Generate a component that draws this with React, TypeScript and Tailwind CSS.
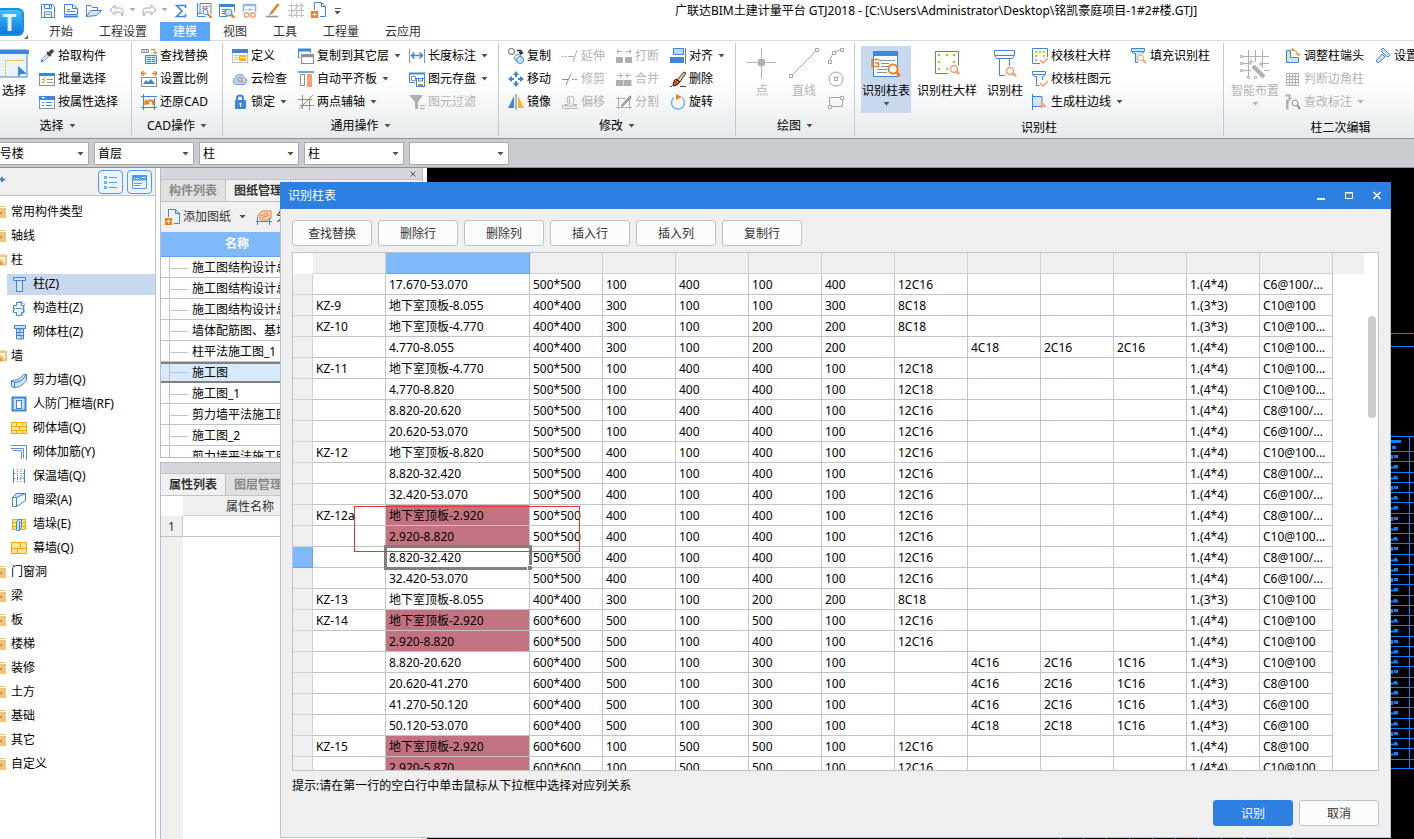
import React, { ReactNode } from 'react';

const B = '#3f87d6';
const L = '#cfe2f8';
const G = '#87929a';
const O = '#f07f24';
const S = '#ff9c70';
const D = '#b0b0b0';
const Y = '#fbb117';

// 16x16 drawings used by the quick bar, the ribbon and the tree
const ICONS: Record<string, ReactNode> = {
  save: <g fill="none" stroke={B}><path d="M1.500 2.500h11l2 2v11h-13z" /><path d="M4.500 2.500v4h7v-4M9.500 3v3M4.500 15v-5h7v5M6 12.500h4" /></g>,
  doc: <g fill="none" stroke={B}><path d="M1.500 2.500h8l5 4v6h-13z" /><path d="M9.500 2.500v4h5M4 9.500h8M4 7.500h3" /><path d="M1 14.500h14" strokeWidth="2" /></g>,
  open: <g fill="none" stroke={B}><path d="M.5 14.500v-11h4l2 2h5v3" /><path d="M.5 14.500l4-6h11l-5 5z" fill={L} /></g>,
  undo: <path d="M1 8l5-5v3h5c3 0 4 3 2 8 0-3-1-4-3-4H6v3z" fill="none" stroke="#a9a9a9" />,
  redo: <path d="M15 8l-5-5v3H5c-3 0-4 3-2 8 0-3 1-4 3-4h4v3z" fill="none" stroke="#a9a9a9" />,
  sum: <path d="M12.500 6V3.500h-9L9 9l-5.500 5.500h9V12" fill="none" stroke={B} strokeWidth="1.600" />,
  lookup: <g fill="none" stroke={B}><path d="M1.500 1v13.500h8M4 11.500V1.500h11V12" /><path d="M1 11.500h5" /><path d="M6.500 4.500h2m1 0h2m1 0h1M6.500 6.500h2m1 0h2" stroke="#8a6a8c" strokeWidth="1.500" /><circle cx="9.500" cy="10" r="2.500" fill="#fff" /><path d="M11.500 12l4 4" stroke="#d9773f" strokeWidth="2" /></g>,
  winsearch: <g fill="none" stroke={B}><path d="M8 14.500H.5v-12h15v7" /><path d="M0 3.500h16" strokeWidth="3" /><path d="M3 7.500h4M3 9.500h3M3 11.500h3" /><circle cx="9.500" cy="10.500" r="3.500" fill={L} /><path d="M12.500 13l3 3" stroke={O} strokeWidth="2.500" /></g>,
  glasses: <g fill="none" stroke="#8fb9e8"><path d="M1.500 10V2.500h12V10M1 3.500h13" strokeWidth="1.500" /><path d="M3 7.500h2M6 7.500h5M8 5.500v4" /><g stroke={S} strokeWidth="1.500"><circle cx="4.500" cy="13" r="2.300" /><circle cx="11" cy="13" r="2.300" /></g></g>,
  pen: <g fill="none"><path d="M1 14.500h12" stroke={G} strokeWidth="1.500" /><path d="M6 11.500L13.500 2" stroke={O} strokeWidth="2.500" /><path d="M3.500 13.500l2-3 1.500 1.500z" fill={G} /></g>,
  grid: <path d="M3.500 1v15M8.500 1v15M13.500 1v15M0 3.500h16M0 8.500h16M0 13.500h16M0 14L14 1M5 15L15 4" stroke="#c4c4c4" fill="none" />,
  adddoc: <g fill="none" stroke={B}><path d="M3.500 8V.500h7l4 4v10H9M10.500.500v4h4" /><rect x="0" y="9" width="7" height="7" fill={O} stroke="none" /><path d="M1.500 12.500h4M3.500 10.500v4" stroke="#fff" /></g>,
  dropper: <g fill="none"><path d="M2 14l1-3 5-5 2 2-5 5z" fill={L} stroke="#9aa6b0" /><path d="M1.500 14.500l1.500-3 1.500 1.500z" fill={B} /><path d="M8 4l4 4" stroke="#444" strokeWidth="2" /><path d="M10 6l3-3" stroke="#444" strokeWidth="3.500" strokeLinecap="round" /></g>,
  batch: <g fill="none" stroke={B}><rect x=".5" y="2.500" width="15" height="12" fill="#fff" stroke={G} /><path d="M0 3.500h16" strokeWidth="3" /><path d="M8 8.500h6M8 11.500h6" stroke={G} /><path d="M3 8l1 1 2-3M3 11l1 1 2-3" stroke={O} /></g>,
  attr: <g fill="none" stroke={B}><rect x=".5" y="2.500" width="15" height="12" fill="#fff" stroke={G} /><path d="M0 4h16" strokeWidth="4" /><path d="M2 3h4l-2 2z" fill="#fff" stroke="none" /><path d="M3 8.500h2M7 8.500h6M3 11.500h2M7 11.500h6" /></g>,
  replace: <g fill="none"><path d="M.5 1.500h7v3h-7zM3 1.500v3M5.500 1.500v3" stroke={G} /><path d="M10 1.500h4v4M12 4l2 2 2-2" stroke={O} /><path d="M6 7.500h9.500v8H4.500v-8z" stroke={B} fill={L} /><path d="M6 9.500h4M6 11.500h4M6 13.500h4M11 9.500h3M11 11.500h3M11 13.500h3" stroke={B} /></g>,
  scale: <g fill="none"><path d="M0 2.500h5M2.500 0L0 2.500 2.500 5M16 2.500h-5M13.500 0L16 2.500 13.500 5" stroke={O} strokeWidth="1.300" /><rect x=".5" y="6.500" width="15" height="9" stroke={G} fill="#fff" /><path d="M2 13l3-4 2 2 3-3 4 5z" fill={B} /></g>,
  restore: <g fill="none"><path d="M2.500 0v16M13.500 4v12M0 2.500h16M0 13.500h16" stroke={B} /><path d="M12 11c1-5-2-6-6-3" stroke={O} strokeWidth="2" /><path d="M3 11l1-6 5 5z" fill={O} /></g>,
  define: <g fill="none"><rect x=".5" y="1.500" width="15" height="13" fill="#fff" stroke="#b8c0c8" /><path d="M0 3h16" stroke={B} strokeWidth="4" /><path d="M2 7.500h4M2 9.500h4M2 11.500h4" stroke="#b8c0c8" /><rect x="7" y="7" width="7" height="6" fill={Y} /><path d="M8 9.500h5" stroke="#fff" /></g>,
  cloud: <g><path d="M4 13.500a3.500 3.500 0 0 1-1-6.500 5 5 0 0 1 9.500-.5A3.800 3.800 0 0 1 12.500 13.500z" fill="#b3d2f5" stroke="#6fa8e6" /><circle cx="8" cy="8.500" r="2" fill="none" stroke={O} /><path d="M9.500 10l2.500 2.500" stroke={O} /></g>,
  lock: <g><path d="M5 7V4.500a3 3 0 0 1 6 0V7" fill="none" stroke={B} strokeWidth="2" /><rect x="3" y="6" width="11" height="9" rx="1" fill={B} /><path d="M7.500 9h2v1.500l-.5.5v2h-1v-2l-.5-.5z" fill="#fff" /></g>,
  copyfloor: <g fill="#fff"><path d="M2 9.500H.5v-8h12V5" stroke={B} fill="none" /><path d="M0 2h13" stroke={B} strokeWidth="3" /><rect x="3.500" y="6.500" width="12" height="9" stroke={G} /><path d="M3 8h13" stroke={G} strokeWidth="2.500" /></g>,
  align2: <g><path d="M0 1h16" stroke={B} strokeWidth="1.500" /><rect x="2.500" y="3.500" width="4" height="11" fill="#fff" stroke={G} /><rect x="9" y="3" width="5" height="13" fill={S} /></g>,
  axis: <g fill="none"><path d="M4.500 1v14M11.500 4v12M0 5.500h14M2 11.500h14" stroke={G} /><path d="M1 15L15 1" stroke={O} /></g>,
  length: <g fill="none" stroke={B}><path d="M.5 1v14M15.500 1v14" stroke={G} /><path d="M2.500 7.500h11M5.500 4.500l-3 3 3 3M10.500 4.500l3 3-3 3" strokeWidth="1.500" /></g>,
  store: <g fill="none" stroke={B}><path d="M6 11.500H.5v-9h15V7" /><path d="M0 2.500h16" strokeWidth="2" /><path d="M2.500 5.500h4v4h-4z" stroke={G} /><rect x="7.500" y="7.500" width="8" height="8" fill="#fff" /><path d="M9.500 8v2h4V8" /><path d="M9 14h5" stroke={O} strokeWidth="2" /></g>,
  filter: <g fill={D}><path d="M0 1h14L9 8v7H6V8z" /><path d="M11 11.500h5M11 14.500h5" stroke={D} /></g>,
  copy: <g fill="none"><circle cx="3.500" cy="3.500" r="3" stroke="#555" /><path d="M9 2.500h4V5M11 4l2 2 2-2" stroke="#222" strokeWidth="1.300" /><circle cx="10" cy="10" r="3.500" stroke={B} fill="#fff" /><circle cx="12" cy="12" r="3.500" stroke={B} fill={L} fillOpacity=".8" /></g>,
  move: <g fill={B}><path d="M8 0l3 4H5zM8 16l-3-4h6zM0 8l4-3v6zM16 8l-4-3v6z" /><path d="M8 3v3M8 10v3M3 8h3M10 8h3" stroke={B} strokeWidth="2" /></g>,
  mirror: <g><path d="M6 2v12H0z" fill={B} /><path d="M8 0v16" stroke="#777" /><path d="M10 2v12h6z" fill={Y} /></g>,
  extend: <g stroke={D} fill="none"><path d="M0 8.500h9" strokeDasharray="2 1" /><path d="M8 8.500h4M11 14l4-12" /></g>,
  trim: <g stroke="#8c8c8c" fill="none"><path d="M0 8.500h6M4 14L9 3" /><path d="M10 8.500h6" strokeDasharray="2 1" /></g>,
  offset: <path d="M1.500 14.500h14M3 11.500H.5v3M15 10.500h-4c-1-1 1-3 1-5a3.500 3.500 0 0 0-7 0c0 2 2 4 1 5H3v1.500h12M8 3.500c-2 2 1 5-1 7" fill="none" stroke={D} />,
  brk: <g fill={D}><rect x="0" y="9" width="7" height="6" /><rect x="9" y="9" width="7" height="6" /><path d="M1 3.500h5M3 1L1 3.500 3 6M15 3.500h-5M13 1l2 2.500L13 6" fill="none" stroke={D} /></g>,
  join: <g fill={D}><rect x="0" y="9" width="7.500" height="6" /><rect x="8" y="9" width="7.500" height="6" /><path d="M1 4.500h5M4 2l2 2.500L4 7M15 4.500h-5M12 2l-2 2.500L12 7" fill="none" stroke={D} /></g>,
  split: <g fill="none" stroke="#8f8f8f"><path d="M2.500 3v12M13.500 5v10M0 4.500h10M0 13.500h16" stroke={D} /><path d="M5 12l8-9 2-1-1 3-7 7z" fill={D} /></g>,
  alignto: <g><rect x="3.500" y=".5" width="10" height="6" fill="#b9d6f8" stroke={B} /><rect x="0" y="9" width="14" height="6" fill={B} /><path d="M15.500 0v16" stroke="#777" /></g>,
  erase: <g><path d="M0 15.500h2M10 15.500h6" stroke="#444" /><path d="M7 9l7-8 2 1-6 9z" fill="#e8c890" stroke="#333" /><path d="M6 8l4 3-3 3-4 1c0-3 1-6 3-7z" fill="#d8501c" stroke="#222" /></g>,
  rotate: <g fill="none"><path d="M4 3.500A6.500 6.500 0 1 0 12 3.500" stroke="#74aef0" strokeWidth="1.500" /><path d="M6 0v6l6-3z" fill={O} /></g>,
  arc: <g fill="none" stroke="#a4a4a4"><path d="M2 13C3 7 6 3 13 2" /><path d="M.5 12.500h3v3h-3zM4.500 3.500h3v3h-3zM12.500.500h3v3h-3z" fill="#fff" /></g>,
  circle: <g fill="none" stroke="#a4a4a4"><circle cx="8" cy="8" r="7" /><path d="M8 8l3-3" /><rect x="6.500" y="6.500" width="3" height="3" fill="#fff" /></g>,
  rect: <g fill="none" stroke="#a4a4a4"><path d="M1.500 3.500h13v9h-13z" /><path d="M.5 11.500h3v3h-3zM12.500 2.500h3v3h-3z" fill="#fff" /></g>,
  checkdetail: <g fill="none" stroke={B}><path d="M8 15.500H.5V.500h15V9" /><path d="M3 4h2m2 0h2m2 0h2M3 8h2M11 8h2M3 12h2" stroke={Y} strokeWidth="2" /><path d="M8 12l3 3 5-5" stroke={S} strokeWidth="1.500" /></g>,
  checkelem: <g fill="none" stroke={B}><path d="M7 14.500H4.500v-9h-2l-2-2v-3h13v3l-2 2h-1V9M1 3.500h12" /><path d="M8 12l3 3 5-5" stroke={S} strokeWidth="1.500" /></g>,
  edge: <g fill="none" stroke={B}><path d="M.5 0v16M0 2.500h10v10H0" fill={L} /><path d="M9 7v8l2-2h4z" fill={S} stroke="none" /></g>,
  fillcol: <g fill="none" stroke={B}><path d="M7 14.500H4.500v-9h-2l-2-2v-3h13v3l-2 2M1 3.500h12" fill={L} /><circle cx="9.500" cy="10" r="3" fill="#fff" stroke={S} /><path d="M12 12l3 3" stroke={S} strokeWidth="2" /></g>,
  adjust: <g fill="none"><path d="M1.500 2.500h4v7h8v5h-12z" stroke={B} fill={L} /><path d="M7 1.500c3 0 5 2 6 5M8 0L6.500 2l3 1M11 5l2.500 3L15 5" stroke={O} /></g>,
  judge: <path d="M1.500 2.500h12v12h-12zM4.500 2v13M7.500 2v13M10.500 2v13M1 5.500h13M1 8.500h13M1 11.500h13" fill="none" stroke={D} />,
  modify: <g fill="none" stroke={D}><path d="M.5 1.500h4v3h2M2 5.500v10M4.500 6.500h-2v9" strokeWidth="2" /><circle cx="10" cy="9" r="3" stroke="#8e8e8e" /><path d="M12 11l3 4" stroke="#8e8e8e" strokeWidth="2" /></g>,
  setting: <g fill={L} stroke={B}><path d="M1 13l6-7 3 3-7 6z" /><path d="M6 2l2-2 7 7-2 2-2-1-4-4z" /></g>,
  col: <g fill={L} stroke={B}><path d="M2.500 1.500h12v3h-12z" /><path d="M5.500 5v10.500h6V5" /></g>,
  gzcol: <g fill="none" stroke={B}><path d="M7.500 1.500h4v2h2v3h-1v2h1v4h-2v2h-2" stroke="#9cc4f2" /><path d="M5.500 2.500h5v3h2v3h-1v1h1v3h-2v3h-5v-3h-3v-3h1v-1h-1v-3h3z" fill="#eaf3fd" /><path d="M5 8.500h5" /></g>,
  qtcol: <g fill={L} stroke={B}><path d="M3.500 1.500h11v3h-11z" /><path d="M5.500 5v10h7V5zM6 8.500h6M6 11.500h6M9 5v3M8 9v3M10 12v3" /></g>,
  shear: <g fill={L} stroke={B}><path d="M.5 8.500c6 0 9-2 12-6h3c-3 5-7 8-12 8z" /><path d="M.5 8.500l3 2v5l-3-1zM3.500 10.500c5 0 9-3 12-8v6c-3 4-7 7-12 7z" /></g>,
  rf: <g fill="none" stroke={B}><rect x="1.500" y="1.500" width="13" height="13" fill={L} strokeWidth="2" /><rect x="5.500" y="4.500" width="5" height="8" fill="#fff" /></g>,
  brick: <path d="M.5 2.500h15v11H.500zM0 6.500h16M0 10.500h16M5.500 2.500v4M11.500 2.500v4M8.500 6.500v4M5.500 10.500v3M11.500 10.500v3" fill="#fde29a" stroke="#f5a800" />,
  rebar: <path d="M0 1.500h15.500V16M0 4.500h12.500V14M2 6.500h8.500V15" fill="none" stroke="#5e8fc8" />,
  insul: <g fill="none" stroke={B}><path d="M2.500 1v14M13.500 1v14" /><path d="M6.500 1v14M10 1v14" strokeDasharray="1 1" /><path d="M3 5.500h10M3 10.500h10" strokeDasharray="1 2" /></g>,
  beam: <g fill="#fff" stroke={B}><path d="M1.500 5.500l4-4h9l-4 4z" fill={L} /><path d="M1.500 5.500h4v9h-4zM5.500 5.500l9-4v7l-9 6z" /></g>,
  duo: <g><path d="M1.500 3.500h13v10h-13zM1 6.500h14M1 10.500h14" fill="#fde29a" stroke="#f5a800" /><path d="M5.500 5.500l2-2h3v8l-2 3h-3zM8.500 5v9" fill={L} stroke={B} /></g>,
  curtain: <path d="M.5 2.500h15v11H.500zM0 8.500h16M9.500 2.500v6M6.500 8.500v5" fill="#fde29a" stroke="#f5a800" />,
  splitdwg: <g fill="none"><path d="M2 6l4-4h9v7l-4 2H5z" stroke={O} fill="#fbd3b4" /><path d="M4 7l8-3M6 9l7-3" stroke={O} /><path d="M1.500 8v8M13.500 9v7M0 12.500h16" stroke={B} /></g>,
};

const Icon = ({ name }: { name: string }) => (
  <svg width="16" height="16" viewBox="0 0 16 16" className="shrink-0" aria-hidden="true">{ICONS[name]}</svg>
);

const Caret = ({ dim = false }: { dim?: boolean }) => (
  <svg width="7" height="4" viewBox="0 0 7 4" className="shrink-0" aria-hidden="true">
    <path d="M.5 0h6l-3 3.500z" fill={dim ? '#b0b0b0' : '#505050'} />
  </svg>
);

interface ToolProps {
  icon: string;
  label: string;
  menu?: boolean;
  dim?: boolean;
}

const Tool = ({ icon, label, menu, dim }: ToolProps) => (
  <button disabled={dim} className={`flex h-[23px] items-center gap-[3px] whitespace-nowrap ${dim ? 'text-[#b4b4b4]' : 'text-black'}`}>
    <Icon name={icon} />
    <span>{label}</span>
    {menu && <span className="pl-[2px]"><Caret dim={dim} /></span>}
  </button>
);

const ToolColumn = ({ items, className = '' }: { items: ToolProps[], className?: string }) => (
  <div className={`flex shrink-0 flex-col items-start pt-px ${className}`}>
    {items.map(item => <Tool key={item.label} {...item} />)}
  </div>
);

interface BigToolProps {
  label: string;
  className?: string;
  dim?: boolean;
  menu?: boolean;
  children: ReactNode;
}

const BigTool = ({ label, className = '', dim, menu, children }: BigToolProps) => (
  <button disabled={dim} className={`mt-[3px] flex h-[67px] shrink-0 flex-col items-center whitespace-nowrap pt-[2px] ${dim ? 'text-[#b4b4b4]' : 'text-black'} ${className}`}>
    <svg width="30" height="32" viewBox="0 0 30 32" aria-hidden="true">{children}</svg>
    <span className="leading-[22px]">{label}</span>
    {menu && <Caret dim={dim} />}
  </button>
);

const Group = ({ label, menu, className, children }: { label: string, menu?: boolean, className: string, children: ReactNode }) => (
  <section className={`flex shrink-0 flex-col border-r border-[#c6cace] ${className}`}>
    <div className="flex h-[70px]">{children}</div>
    {menu
      ? <button className="flex h-6 items-center justify-center gap-[5px] pt-[2px]">{label}<Caret /></button>
      : <p className="flex h-6 items-center justify-center pt-[6px]">{label}</p>}
  </section>
);

const TABS = ['开始', '工程设置', '建模', '视图', '工具', '工程量', '云应用'];
const QUICK = ['save', 'doc', 'open', 'undo', 'redo', 'sum', 'lookup', 'winsearch', 'glasses', 'pen', 'grid', 'adddoc'];

const Header = () => (
  <header className="flex shrink-0 bg-white">
    <div className="flex w-8 shrink-0 items-end border-b border-[#d9d9d9]">
      <div className="mb-1 flex h-7 w-6 items-center justify-center rounded-r-md border-2 border-l-0 border-[#1690e8] bg-linear-to-b from-[#3fc0f8] to-[#0f78dc] pr-[3px] text-[24px] font-bold text-[#e6f4ff]">T</div>
      <svg width="4" height="4" className="mb-[1px]" aria-hidden="true"><path d="M4 0v4H0z" fill="#666" /></svg>
    </div>
    <div className="min-w-0 flex-1">
      <div className="flex h-[22px] items-center pl-2">
        <div className="flex shrink-0 items-center gap-[7px]">
          {QUICK.map(name => (
            <button key={name} aria-label={name} className="flex -translate-y-px items-center gap-1">
              <Icon name={name} />
              {(name === 'undo' || name === 'redo') && <span className="w-[5px]"><Caret dim /></span>}
            </button>
          ))}
          <button aria-label="more" className="flex flex-col items-center gap-[2px]"><span className="h-px w-[6px] bg-[#555]" /><Caret /></button>
        </div>
        <h1 className="flex-1 truncate pl-[334px]">广联达BIM土建计量平台 GTJ2018 - [C:\Users\Administrator\Desktop\铭凯豪庭项目-1#2#楼.GTJ]</h1>
      </div>
      <nav className="flex h-[19px] border-b border-[#d9d9d9] pl-1 text-[#333]">
        {TABS.map(tab => (
          <button key={tab} className={`h-[19px] px-[13px] leading-[19px] ${tab === '建模' ? 'bg-[#5aa7f7] text-white' : ''}`}>{tab}</button>
        ))}
      </nav>
    </div>
  </header>
);

const Ribbon = () => (
  <div className="flex h-[98px] shrink-0 overflow-hidden border-b border-[#8d9196] bg-linear-to-b from-white from-40% to-[#e6eaec] py-[2px]">
    <Group label="选择" menu className="w-[132px] pr-4">
      <div className="flex gap-[11px]">
        <BigTool label="选择" className="w-7">
          <rect x="-1" y="2" width="29" height="27" fill="#eaf2fc" stroke={B} />
          <path d="M0 4h30" stroke={B} strokeWidth="4" />
          <path d="M6.500 29V12.500H26" fill="none" stroke={Y} strokeDasharray="2 1" />
          <path d="M19 18v11l3-3h6z" fill={B} />
        </BigTool>
        <ToolColumn items={[
          { icon: 'dropper', label: '拾取构件' },
          { icon: 'batch', label: '批量选择' },
          { icon: 'attr', label: '按属性选择' },
        ]} />
      </div>
    </Group>
    <Group label="CAD操作" menu className="w-[91px]">
      <ToolColumn className="pl-[9px]" items={[
        { icon: 'replace', label: '查找替换' },
        { icon: 'scale', label: '设置比例' },
        { icon: 'restore', label: '还原CAD' },
      ]} />
    </Group>
    <Group label="通用操作" menu className="w-[276px]">
      <ToolColumn className="w-[75px] pl-[9px]" items={[
        { icon: 'define', label: '定义' },
        { icon: 'cloud', label: '云检查' },
        { icon: 'lock', label: '锁定', menu: true },
      ]} />
      <ToolColumn className="w-[111px]" items={[
        { icon: 'copyfloor', label: '复制到其它层', menu: true },
        { icon: 'align2', label: '自动平齐板', menu: true },
        { icon: 'axis', label: '两点辅轴', menu: true },
      ]} />
      <ToolColumn items={[
        { icon: 'length', label: '长度标注', menu: true },
        { icon: 'store', label: '图元存盘', menu: true },
        { icon: 'filter', label: '图元过滤', dim: true },
      ]} />
    </Group>
    <Group label="修改" menu className="w-[237px]">
      <ToolColumn className="w-[63px] pl-[9px]" items={[
        { icon: 'copy', label: '复制' },
        { icon: 'move', label: '移动' },
        { icon: 'mirror', label: '镜像' },
      ]} />
      <ToolColumn className="w-[54px]" items={[
        { icon: 'extend', label: '延伸', dim: true },
        { icon: 'trim', label: '修剪', dim: true },
        { icon: 'offset', label: '偏移', dim: true },
      ]} />
      <ToolColumn className="w-[54px]" items={[
        { icon: 'brk', label: '打断', dim: true },
        { icon: 'join', label: '合并', dim: true },
        { icon: 'split', label: '分割', dim: true },
      ]} />
      <ToolColumn items={[
        { icon: 'alignto', label: '对齐', menu: true },
        { icon: 'erase', label: '删除' },
        { icon: 'rotate', label: '旋转' },
      ]} />
    </Group>
    <Group label="绘图" menu className="w-[119px]">
      <BigTool label="点" dim className="ml-2 w-9">
        <path d="M14.500 0v10M14.500 19v11M0 14.500h10M19 14.500h10" stroke={D} />
        <circle cx="14.500" cy="14.500" r="4" fill={D} />
      </BigTool>
      <BigTool label="直线" dim className="ml-[6px] w-9">
        <path d="M2 28L28 2" stroke="#a4a4a4" />
        <path d="M.5 26.500h3v3h-3zM26.500.500h3v3h-3z" fill="#fff" stroke="#a4a4a4" />
      </BigTool>
      <div className="ml-[6px] flex flex-col pt-px">
        {['arc', 'circle', 'rect'].map(name => (
          <button key={name} disabled aria-label={name} className="flex h-[23px] items-center"><Icon name={name} /></button>
        ))}
      </div>
    </Group>
    <Group label="识别柱" className="w-[369px]">
      <BigTool label="识别柱表" menu className="ml-[6px] w-[50px] bg-[#c8d8ef]">
        <rect x="2.500" y="3.500" width="24" height="25" fill="#fff" stroke={B} />
        <path d="M2 5.500h25" stroke={B} strokeWidth="5" />
        <path d="M8 12.500h16M10 15.500h8M6 21.500h10M6 24.500h10M10 18.500h7" stroke={G} />
        <path d="M8 11.500H1v7h6.500v-3.500H4" fill="none" stroke={O} strokeWidth="1.500" />
        <circle cx="22" cy="21" r="4.500" fill="#fff" stroke={O} strokeWidth="2" />
        <path d="M25 24l4 4" stroke={O} strokeWidth="3" />
      </BigTool>
      <BigTool label="识别柱大样" className="ml-[6px] w-[60px]">
        <path d="M16 25.500H3.500v-22h23v14" fill="none" stroke={B} />
        <path d="M6 7h2m6 0h2m5 0h2M6 14h2M6 21h2m6 0h2M21 14h2" stroke="#f5a800" strokeWidth="2" />
        <circle cx="22" cy="21" r="3.500" fill="#fff" stroke={S} strokeWidth="1.500" />
        <path d="M24 23l3 3" stroke={S} strokeWidth="2.500" />
      </BigTool>
      <BigTool label="识别柱" className="ml-[10px] w-9">
        <path d="M15 27.500H9.500v-17H6.500l-2-3v-5h20v5l-2 3h-3V18M5 7.500h19M9 10.500h11" fill="none" stroke={B} />
        <circle cx="20" cy="23" r="3.500" fill="#fff" stroke={S} strokeWidth="1.500" />
        <path d="M22 25l4 3" stroke={S} strokeWidth="2.500" />
      </BigTool>
      <ToolColumn className="w-[108px] pl-[9px]" items={[
        { icon: 'checkdetail', label: '校核柱大样' },
        { icon: 'checkelem', label: '校核柱图元' },
        { icon: 'edge', label: '生成柱边线', menu: true },
      ]} />
      <ToolColumn items={[{ icon: 'fillcol', label: '填充识别柱' }]} />
    </Group>
    <Group label="柱二次编辑" className="w-[234px]">
      <BigTool label="智能布置" menu dim className="ml-[6px] w-[50px]">
        <path d="M8.500 2v27M15.500 2v12M22.500 2v18M1 8.500h28M1 15.500h10M1 22.500h10M22 15.500h7M24 22.500h5" stroke={D} />
        <path d="M.5 7.500h2v2h-2zM.5 14.500h2v2h-2zM.5 21.500h2v2h-2zM7.500 28.500h2v2h-2zM14.500 28.500h2v2h-2z" fill="#fff" stroke={D} />
        <path d="M13 18l11 11" stroke={D} strokeWidth="4" />
        <path d="M11 11v6M8 14h6M19 16h4M21 14v4" stroke={D} />
      </BigTool>
      <ToolColumn className="ml-[5px] w-[90px]" items={[
        { icon: 'adjust', label: '调整柱端头' },
        { icon: 'judge', label: '判断边角柱', dim: true },
        { icon: 'modify', label: '查改标注', dim: true, menu: true },
      ]} />
      <ToolColumn items={[{ icon: 'setting', label: '设置' }]} />
    </Group>
  </div>
);

const COMBOS = [
  { name: '楼栋', value: '1号楼' },
  { name: '楼层', value: '首层' },
  { name: '构件大类', value: '柱' },
  { name: '构件类型', value: '柱' },
  { name: '构件', value: '' },
];

const ComboBar = () => (
  <div className="flex h-[29px] shrink-0 overflow-hidden border-b border-[#8d9196] bg-[#c9ccd1] pt-[3px]">
    <div className="-ml-[11px] flex gap-[5px]">
      {COMBOS.map(({ name, value }) => (
        <div key={name} className="relative h-[23px] w-[100px] border border-[#a8abb0] bg-white">
          <select aria-label={name} defaultValue={value} className="h-full w-full appearance-none px-[3px] leading-5 outline-none">
            <option value={value}>{value}</option>
          </select>
          <span className="pointer-events-none absolute right-1 top-[9px] flex"><Caret /></span>
        </div>
      ))}
    </div>
  </div>
);

interface TreeNode {
  label: string;
  open?: boolean;
  children?: [string, string][];
}

const TREE: TreeNode[] = [
  { label: '常用构件类型' },
  { label: '轴线' },
  { label: '柱', open: true, children: [['col', '柱(Z)'], ['gzcol', '构造柱(Z)'], ['qtcol', '砌体柱(Z)']] },
  {
    label: '墙', open: true, children: [
      ['shear', '剪力墙(Q)'], ['rf', '人防门框墙(RF)'], ['brick', '砌体墙(Q)'], ['rebar', '砌体加筋(Y)'],
      ['insul', '保温墙(Q)'], ['beam', '暗梁(A)'], ['duo', '墙垛(E)'], ['curtain', '幕墙(Q)'],
    ],
  },
  { label: '门窗洞' }, { label: '梁' }, { label: '板' }, { label: '楼梯' }, { label: '装修' },
  { label: '土方' }, { label: '基础' }, { label: '其它' }, { label: '自定义' },
];

const Folder = ({ open }: { open?: boolean }) => (
  <svg width="7" height="14" viewBox="0 0 7 14" aria-hidden="true">
    {open
      ? <g><path d="M0 1.500h7v11H0z" fill="#efc57c" /><path d="M0 4h5v7L2 6H0z" fill="#fff6e4" /><path d="M0 8l3 4H0z" fill="#d89a3c" /></g>
      : <g><path d="M0 1.500h5.500" stroke="#efc57c" /><path d="M0 3h6v10H0z" fill="#efc57c" /><path d="M0 8h2" stroke="#8a6420" /></g>}
  </svg>
);

const Sidebar = () => (
  <aside className="flex w-[156px] shrink-0 flex-col border-r border-[#c0c4ca] bg-white">
    <div className="flex h-7 shrink-0 items-center border-b border-[#c0c4ca] bg-[#efefef]">
      <svg width="5" height="7" className="mb-1" aria-hidden="true"><path d="M0 3.500h5M2 1v5" stroke={B} strokeWidth="2" /></svg>
      <div className="ml-auto flex gap-1 pr-[3px]">
        <button aria-label="列表" className="flex h-6 w-[25px] items-center justify-center rounded border border-[#4f9df0] bg-[#eaf4ff]">
          <svg width="13" height="14" aria-hidden="true"><path d="M.5 1.500h2v2h-2zM.5 6.500h2v2h-2zM.5 11.500h2v2h-2zM5 2.500h8M5 7.500h8M5 12.500h8" fill="none" stroke="#4f9df0" /></svg>
        </button>
        <button aria-label="面板" className="flex h-6 w-[25px] items-center justify-center rounded border border-[#4f9df0] bg-[#eaf4ff]">
          <svg width="15" height="14" aria-hidden="true"><path d="M.5.500h14v13H.500zM2 8.500h8M2 10.500h6" fill="none" stroke="#4f9df0" /><path d="M0 3h15" stroke="#4f9df0" strokeWidth="5" /><path d="M2 3.500h1m1 0h1m1 0h1m3-1h3" stroke="#fff" /></svg>
        </button>
      </div>
    </div>
    <ul className="pt-1">
      {TREE.map(node => (
        <li key={node.label}>
          <button className="flex h-6 items-center gap-1"><Folder open={node.open} />{node.label}</button>
          {node.children && (
            <ul>
              {node.children.map(([icon, label]) => (
                <li key={label} className="flex h-6 items-center pl-[7px]">
                  <button className={`flex h-[21px] flex-1 items-center gap-[6px] pl-1 ${label === '柱(Z)' ? 'bg-[#c8d8ef]' : ''}`}>
                    <Icon name={icon} />{label}
                  </button>
                </li>
              ))}
            </ul>
          )}
        </li>
      ))}
    </ul>
  </aside>
);

const DRAWINGS = ['施工图结构设计总说明', '施工图结构设计总说明', '施工图结构设计总说明', '墙体配筋图、基坑大样', '柱平法施工图_1', '施工图', '施工图_1', '剪力墙平法施工图', '施工图_2', '剪力墙平法施工图_1'];
const CURRENT_DRAWING = '施工图';

const PanelTabs = ({ tabs, active }: { tabs: string[], active: string }) => (
  <div className="flex h-[22px] shrink-0 border-b border-[#c0c4ca] bg-[#efefef] font-bold">
    {tabs.map(tab => (
      <button key={tab} className={`w-[65px] border-r border-[#c0c4ca] ${tab === active ? 'bg-[#f1f1f1] text-[#333]' : 'bg-[#e0e0e0] text-[#888]'}`}>{tab}</button>
    ))}
  </div>
);

const DrawingPanel = () => (
  <div className="flex w-[271px] shrink-0 flex-col bg-white pl-1 pr-1">
    <div className="flex h-[290px] shrink-0 flex-col border border-t-0 border-[#b8bcc2]">
      <div className="flex h-3 shrink-0 items-center justify-end border-b border-[#c0c4ca] bg-[#d4d6db] pr-[6px]">
        <button aria-label="关闭" className="flex"><svg width="6" height="6" aria-hidden="true"><path d="M.5.500l5 5M5.500.500l-5 5" stroke="#555" /></svg></button>
      </div>
      <PanelTabs tabs={['构件列表', '图纸管理']} active="图纸管理" />
      <div className="flex h-[30px] shrink-0 items-center bg-[#f0f0f0] pl-1 text-[#333]">
        <button className="flex items-center gap-[2px]"><Icon name="adddoc" />添加图纸<span className="pl-[6px]"><Caret /></span></button>
        <button className="ml-[10px] flex items-center gap-1 whitespace-nowrap"><Icon name="splitdwg" />分割</button>
      </div>
      <div className="min-h-0 flex-1 overflow-hidden">
        <table className="w-full table-fixed border-separate border-spacing-0">
          <thead>
            <tr className="h-[25px] bg-[#7fb9f9] text-white">
              <th className="w-[152px] border-b border-[#64a4ea] p-0">名称</th>
              <th className="border-b border-[#64a4ea] p-0">比例</th>
            </tr>
          </thead>
          <tbody>
            {DRAWINGS.map((name, i) => (
              <tr key={i} className="h-[21px]">
                <td colSpan={2} className={`p-0 ${name === CURRENT_DRAWING ? 'border-y-2 border-[#808080] bg-[#d6e9fd]' : 'border-b border-[#c0c4ca]'}`}>
                  <div className={`ml-2 flex items-center overflow-hidden whitespace-nowrap border-l border-[#c0c4ca] ${name === CURRENT_DRAWING ? 'h-[17px]' : 'h-5 pt-[2px]'}`}>
                    <span className="mr-1 h-px w-[18px] shrink-0 bg-[#c0c4ca]" />{name}
                  </div>
                </td>
              </tr>
            ))}
          </tbody>
        </table>
      </div>
    </div>
    <div className="mt-1 flex min-h-0 flex-1 flex-col border border-b-0 border-[#b8bcc2]">
      <div className="h-[11px] shrink-0 border-b border-[#c0c4ca] bg-[#d4d6db]" />
      <PanelTabs tabs={['属性列表', '图层管理']} active="属性列表" />
      <div className="flex-1 bg-linear-to-r from-[#efefef] from-[22px] to-white to-[22px]">
        <table className="w-full table-fixed border-separate border-spacing-0 text-[#333]">
          <thead>
            <tr className="h-5">
              <th aria-label="行号" className="w-[22px] bg-white p-0" />
              <th className="w-[134px] border-b border-[#d0d0d0] bg-[#efefef] p-0 pt-[2px] font-normal">属性名称</th>
              <th className="border-b border-[#d0d0d0] bg-[#efefef] p-0 pt-[2px] font-normal">属性值</th>
            </tr>
          </thead>
          <tbody>
            <tr className="h-[21px]">
              <td className="border-b border-r border-[#c0c4ca] p-0 pt-[2px] text-center">1</td>
              <td className="border-b border-r border-[#c0c4ca] bg-white" />
              <td className="border-b border-[#c0c4ca] bg-white" />
            </tr>
          </tbody>
        </table>
      </div>
    </div>
  </div>
);

const CAD_ROWS = Array.from({ length: 31 }, (_, i) => 451 + Math.round(i * 10.25));

const CadCanvas = () => (
  <div className="min-w-0 flex-1 bg-black">
    <svg className="block h-full w-full" viewBox="427 168 987 671" preserveAspectRatio="xMaxYMin slice" aria-hidden="true">
      <g stroke="#0a80ff" fill="none">
        <path d="M1391 333.500h23M1391 346.500h23M1391 436.500h23M1409.500 436v332M1391 768.500h23" />
        {CAD_ROWS.map(y => <path key={y} d={`M1391 ${y}.5h23`} />)}
        <path d="M1391 441.500h10M1392 447.500h4" strokeWidth="3" />
        {CAD_ROWS.slice(0, -1).map((y, i) => (
          <path key={y} d={i % 3 === 0 ? `M1391.500 ${y + 4}v4M1394 ${y + 5}.5h4` : `M1391 ${y + 6}.5h7M1394 ${y + 5}h${3 + (i % 2)}`} strokeWidth={i % 3 === 0 ? 3 : 2} />
        ))}
        <path d="M1060 838.500h250" strokeDasharray="1 22" />
      </g>
    </svg>
  </div>
);

type Row = string[];

const ROWS: Row[] = [
  ['', '17.670-53.070', '500*500', '100', '400', '100', '400', '12C16', '', '', '', '1.(4*4)', 'C6@100/...'],
  ['KZ-9', '地下室顶板-8.055', '400*400', '300', '100', '100', '300', '8C18', '', '', '', '1.(3*3)', 'C10@100'],
  ['KZ-10', '地下室顶板-4.770', '400*400', '300', '100', '200', '200', '8C18', '', '', '', '1.(3*3)', 'C10@100...'],
  ['', '4.770-8.055', '400*400', '300', '100', '200', '200', '', '4C18', '2C16', '2C16', '1.(4*4)', 'C10@100...'],
  ['KZ-11', '地下室顶板-4.770', '500*500', '100', '400', '400', '100', '12C18', '', '', '', '1.(4*4)', 'C10@100...'],
  ['', '4.770-8.820', '500*500', '100', '400', '400', '100', '12C18', '', '', '', '1.(4*4)', 'C10@100...'],
  ['', '8.820-20.620', '500*500', '100', '400', '400', '100', '12C16', '', '', '', '1.(4*4)', 'C8@100/...'],
  ['', '20.620-53.070', '500*500', '100', '400', '400', '100', '12C16', '', '', '', '1.(4*4)', 'C6@100/...'],
  ['KZ-12', '地下室顶板-8.820', '500*500', '400', '100', '400', '100', '12C16', '', '', '', '1.(4*4)', 'C10@100...'],
  ['', '8.820-32.420', '500*500', '400', '100', '400', '100', '12C16', '', '', '', '1.(4*4)', 'C8@100/...'],
  ['', '32.420-53.070', '500*500', '400', '100', '400', '100', '12C16', '', '', '', '1.(4*4)', 'C6@100/...'],
  ['KZ-12a', '地下室顶板-2.920', '500*500', '400', '100', '400', '100', '12C16', '', '', '', '1.(4*4)', 'C8@100/...'],
  ['', '2.920-8.820', '500*500', '400', '100', '400', '100', '12C16', '', '', '', '1.(4*4)', 'C10@100...'],
  ['', '8.820-32.420', '500*500', '400', '100', '400', '100', '12C16', '', '', '', '1.(4*4)', 'C8@100/...'],
  ['', '32.420-53.070', '500*500', '400', '100', '400', '100', '12C16', '', '', '', '1.(4*4)', 'C6@100/...'],
  ['KZ-13', '地下室顶板-8.055', '400*400', '300', '100', '200', '200', '8C18', '', '', '', '1.(3*3)', 'C10@100'],
  ['KZ-14', '地下室顶板-2.920', '600*600', '500', '100', '500', '100', '12C16', '', '', '', '1.(4*4)', 'C10@100'],
  ['', '2.920-8.820', '600*500', '500', '100', '400', '100', '12C16', '', '', '', '1.(4*4)', 'C10@100'],
  ['', '8.820-20.620', '600*400', '500', '100', '300', '100', '', '4C16', '2C16', '1C16', '1.(4*3)', 'C10@100'],
  ['', '20.620-41.270', '600*400', '500', '100', '300', '100', '', '4C16', '2C16', '1C16', '1.(4*3)', 'C8@100'],
  ['', '41.270-50.120', '600*400', '500', '100', '300', '100', '', '4C16', '2C16', '1C16', '1.(4*3)', 'C6@100'],
  ['', '50.120-53.070', '600*400', '500', '100', '300', '100', '', '4C18', '2C18', '1C16', '1.(4*3)', 'C6@100'],
  ['KZ-15', '地下室顶板-2.920', '600*600', '100', '500', '500', '100', '12C16', '', '', '', '1.(4*4)', 'C8@100'],
  ['', '2.920-5.870', '600*600', '100', '500', '500', '100', '12C16', '', '', '', '1.(4*4)', 'C10@100'],
];

const ERROR_ROWS = [11, 12, 16, 17, 22, 23];
const CURRENT_ROW = 13;

const cellClass = (row: number, col: number) => {
  if (col !== 1) return '';
  if (row === CURRENT_ROW) return 'relative outline-3 -outline-offset-1 outline-[#808080]';
  return ERROR_ROWS.includes(row) ? 'bg-[#c3727f]' : '';
};

const ColumnTable = () => (
  <div className="relative min-h-0 flex-1 overflow-hidden border border-[#c0c4ca] bg-white">
    <table className="w-[1071px] table-fixed border-separate border-spacing-0">
      <thead>
        <tr className="h-[21px] bg-[#efefef]">
          <th aria-label="行号" className="w-5 bg-white" />
          {ROWS[0].map((_, i) => (
            <th key={i} aria-label={`第${i + 1}列`} className={`border-b border-r ${i === 1 ? 'w-[144px] border-[#64a4ea] bg-[#7fb9f9]' : 'w-[73px] border-[#d0d2d6]'}`} />
          ))}
          <th aria-hidden="true" />
        </tr>
      </thead>
      <tbody>
        {ROWS.map((row, r) => (
          <tr key={r} className="h-[21px]">
            <th aria-label={`${r + 1}`} className={`border-b border-r ${r === CURRENT_ROW ? 'border-[#64a4ea] bg-[#7fb9f9]' : 'border-[#d0d2d6] bg-[#efefef]'}`} />
            {row.map((value, c) => (
              <td key={c} className={`whitespace-nowrap border-b border-r border-[#c0c4ca] p-0 pl-[3px] pt-[2px] leading-[18px] ${cellClass(r, c)}`}>
                {value}
                {r === CURRENT_ROW && c === 1 && <span className="absolute -bottom-[3px] -right-[3px] size-[5px] border-l border-t border-white bg-[#808080]" />}
              </td>
            ))}
          </tr>
        ))}
      </tbody>
    </table>
    <div className="absolute left-[61px] top-[253px] h-[46px] w-[226px] border border-[#f23030]" />
    <div className="absolute right-[2px] top-[63px] h-[102px] w-2 rounded-full bg-[#cbcbcb]" />
  </div>
);

const ACTIONS = ['查找替换', '删除行', '删除列', '插入行', '插入列', '复制行'];

const DialogButton = ({ label, primary }: { label: string, primary?: boolean }) => (
  <button className={`h-[26px] w-20 rounded-[3px] border pt-px ${primary ? 'border-[#2d80e2] bg-[#2d80e2] text-white' : 'border-[#bcc3d0] bg-[#fbfbfb] text-[#333]'}`}>{label}</button>
);

const RecognizeDialog = () => (
  <div role="dialog" aria-label="识别柱表" className="absolute bottom-px left-[280px] right-[23px] top-[14px] flex flex-col bg-[#efefef]">
    <div className="flex h-[27px] shrink-0 items-center justify-between bg-[#2d80e2] pl-2 pr-[10px] text-white">
      <h2>识别柱表</h2>
      <div className="flex gap-5">
        <button aria-label="最小化"><svg width="8" height="9" aria-hidden="true"><path d="M0 8h8" stroke="#fff" strokeWidth="2" /></svg></button>
        <button aria-label="最大化"><svg width="8" height="9" aria-hidden="true"><path d="M.5 1.500h7v6h-7zM0 2h8" fill="none" stroke="#fff" /></svg></button>
        <button aria-label="关闭"><svg width="8" height="9" aria-hidden="true"><path d="M.5 1l7 7M7.500 1l-7 7" stroke="#fff" strokeWidth="1.500" /></svg></button>
      </div>
    </div>
    <div className="flex min-h-0 flex-1 flex-col border border-t-0 border-[#bcc3d0] px-[11px] pb-[11px] pt-[11px]">
      <div className="mb-[6px] flex shrink-0 gap-[6px]">
        {ACTIONS.map(label => <DialogButton key={label} label={label} />)}
      </div>
      <ColumnTable />
      <p className="h-[29px] shrink-0 leading-[29px]">提示:请在第一行的空白行中单击鼠标从下拉框中选择对应列关系</p>
      <div className="flex shrink-0 justify-end gap-[6px]">
        <DialogButton label="识别" primary />
        <DialogButton label="取消" />
      </div>
    </div>
  </div>
);

export default function App() {
  return (
    <div className="flex h-screen flex-col overflow-hidden bg-white font-['Noto_Sans','Noto_Sans_CJK_SC',sans-serif] text-[12px] leading-4 text-black">
      <Header />
      <Ribbon />
      <ComboBar />
      <main className="relative flex min-h-0 flex-1 overflow-hidden">
        <Sidebar />
        <DrawingPanel />
        <CadCanvas />
        <RecognizeDialog />
      </main>
    </div>
  );
}
